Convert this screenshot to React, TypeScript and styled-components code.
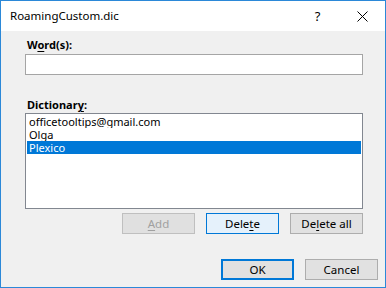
import React from 'react';
import styled, { createGlobalStyle } from 'styled-components';

const GlobalStyle = createGlobalStyle`
  html, body {
    margin: 0;
    padding: 0;
    background: #ffffff;
  }
  body {
    font-family: "Noto Sans", "Open Sans", "Liberation Sans", sans-serif;
    font-size: 11px;
    color: #000000;
  }
`;

const Window = styled.div`
  width: 386px;
  height: 288px;
  box-sizing: border-box;
  border: 1px solid #2b88d8;
  display: flex;
  flex-direction: column;
  background: #f0f0f0;
`;

const TitleBar = styled.div`
  height: 30px;
  flex: 0 0 auto;
  background: #ffffff;
  display: flex;
  align-items: center;
  padding-left: 9px;
`;

const Title = styled.div`
  flex: 1 1 auto;
  font-size: 11.5px;
  line-height: 16px;
  margin-top: -1px;
`;

const TitleButton = styled.div`
  width: 45px;
  height: 30px;
  display: flex;
  align-items: center;
  justify-content: center;
  font-size: 13px;
`;

const Body = styled.div`
  flex: 1 1 auto;
  display: flex;
  flex-direction: column;
  padding: 6px 22px 0 24px;
`;

const Label = styled.div<{ $gap?: number }>`
  font-weight: bold;
  line-height: 16px;
  padding-left: 2px;
  margin-bottom: ${(p) => p.$gap ?? 0}px;
`;

const TextInput = styled.div`
  height: 21px;
  box-sizing: border-box;
  border: 1px solid #a5a5a5;
  background: #ffffff;
  margin-bottom: 22px;
`;

const ListBox = styled.div`
  height: 96px;
  box-sizing: border-box;
  border: 1px solid #828790;
  background: #ffffff;
  padding: 1px;
`;

const ListItem = styled.div<{ $selected?: boolean }>`
  height: 13px;
  line-height: 13px;
  padding-left: 2px;
  overflow: hidden;
  background: ${(p) => (p.$selected ? '#0078d7' : 'transparent')};
  color: ${(p) => (p.$selected ? '#ffffff' : '#000000')};
  white-space: nowrap;
`;

const ButtonRow = styled.div<{ $gap: number }>`
  display: flex;
  justify-content: flex-end;
  gap: ${(p) => p.$gap}px;
`;

const EditRow = styled(ButtonRow)`
  margin-top: 4px;
`;

const Footer = styled(ButtonRow)`
  padding: 0 7px 7px 0;
`;

type Variant = 'normal' | 'disabled' | 'hover' | 'default';

const Button = styled.div<{ $variant?: Variant }>`
  width: 73px;
  height: 21px;
  box-sizing: border-box;
  display: flex;
  align-items: center;
  justify-content: center;
  line-height: 16px;
  font-size: 11.5px;
  background: ${(p) =>
    p.$variant === 'hover' ? '#e5f1fb' : p.$variant === 'disabled' ? '#e0e0e0' : '#e1e1e1'};
  border: ${(p) =>
    p.$variant === 'default'
      ? '2px solid #0078d7'
      : p.$variant === 'hover'
        ? '1px solid #0078d7'
        : p.$variant === 'disabled'
          ? '1px solid #bfbfbf'
          : '1px solid #adadad'};
  color: ${(p) => (p.$variant === 'disabled' ? '#a0a0a0' : '#000000')};
`;

const Key = styled.span`
  text-decoration: underline;
  text-underline-offset: 2px;
`;

function CloseIcon() {
  return (
    <svg width="11" height="11" viewBox="0 0 11 11">
      <path d="M0.5 0.5 L10.5 10.5 M10.5 0.5 L0.5 10.5" stroke="#000" strokeWidth="1" fill="none" />
    </svg>
  );
}

const words = ['officetooltips@gmail.com', 'Olga', 'Plexico'];

export default function App() {
  return (
    <>
      <GlobalStyle />
      <Window>
        <TitleBar>
          <Title>RoamingCustom.dic</Title>
          <TitleButton>?</TitleButton>
          <TitleButton>
            <CloseIcon />
          </TitleButton>
        </TitleBar>
        <Body>
          <Label $gap={1}>
            W<Key>o</Key>rd(s):
          </Label>
          <TextInput />
          <Label>
            Dictionar<Key>y</Key>:
          </Label>
          <ListBox>
            {words.map((w, i) => (
              <ListItem key={w} $selected={i === 2}>
                {w}
              </ListItem>
            ))}
          </ListBox>
          <EditRow $gap={11}>
            <Button $variant="disabled">
              <Key>A</Key>dd
            </Button>
            <Button $variant="hover">
              Dele<Key>t</Key>e
            </Button>
            <Button>
              De<Key>l</Key>ete all
            </Button>
          </EditRow>
        </Body>
        <Footer $gap={11}>
          <Button $variant="default">OK</Button>
          <Button>Cancel</Button>
        </Footer>
      </Window>
    </>
  );
}
